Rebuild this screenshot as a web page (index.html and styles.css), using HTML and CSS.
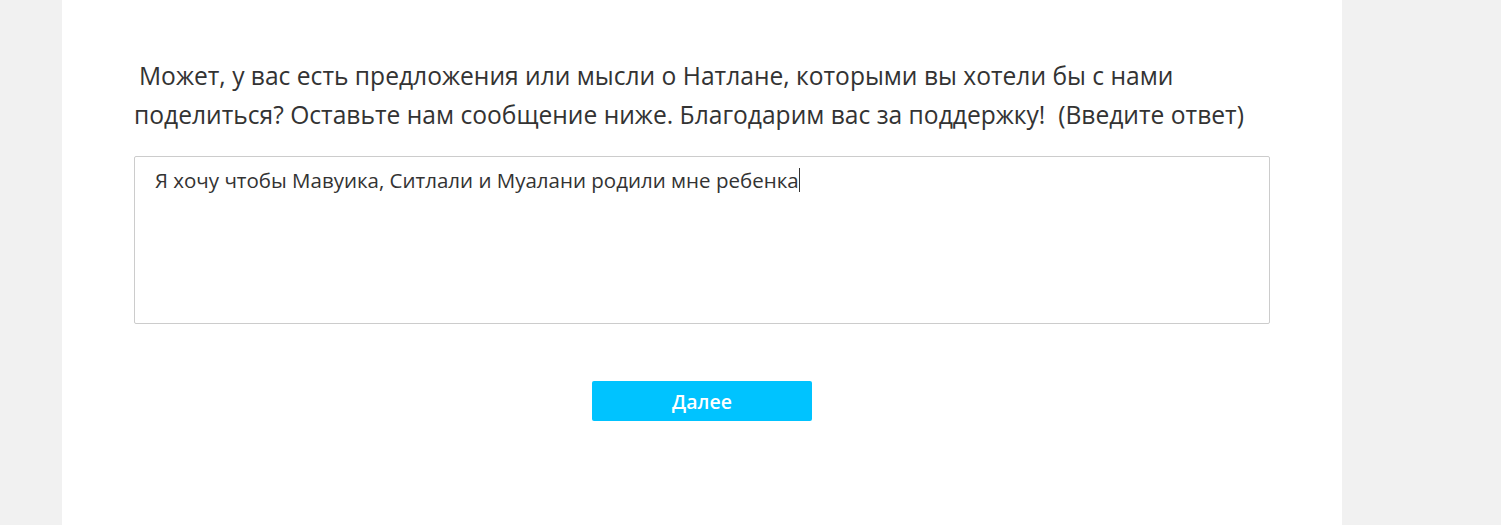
FILE: index.html
```html
<!DOCTYPE html>
<html lang="ru">
<head>
<meta charset="utf-8">
<title>Опрос</title>
<link rel="stylesheet" href="styles.css">
</head>
<body>
<main class="page">
  <section class="question">
    <p class="question-title">Может, у вас есть предложения или мысли о Натлане, которыми вы хотели бы с нами поделиться? Оставьте нам сообщение ниже. Благодарим вас за поддержку!&nbsp; (Введите ответ)</p>
    <div class="answer"><span class="answer-text">Я хочу чтобы Мавуика, Ситлали и Муалани родили мне ребенка</span><span class="caret"></span></div>
  </section>
  <div class="actions">
    <button class="next" type="button">Далее</button>
  </div>
</main>
</body>
</html>
```
FILE: styles.css
```css
html, body {
  margin: 0;
  padding: 0;
}
body {
  background: #f1f1f1;
  font-family: "Open Sans", "Noto Sans", sans-serif;
  color: #333;
}
.page {
  width: 1280px;
  margin-left: 62px;
  min-height: 525px;
  background: #fff;
  box-sizing: border-box;
  padding: 56px 72px 0;
}
.question-title {
  margin: 0;
  font-size: 24.6px;
  line-height: 39px;
  text-indent: 5px;
  color: #333;
}
.answer {
  margin-top: 22px;
  height: 168px;
  box-sizing: border-box;
  border: 1px solid #ccc;
  border-radius: 2px;
  padding: 9px 20px;
  font-size: 20.5px;
  line-height: 28px;
  color: #333;
  display: flex;
  align-items: flex-start;
}
.caret {
  display: inline-block;
  width: 1px;
  height: 24px;
  margin-top: 2px;
  background: #333;
}
.actions {
  display: flex;
  justify-content: center;
  padding-top: 57px;
}
.next {
  width: 220px;
  height: 40px;
  border: none;
  border-radius: 2px;
  background: #00c3ff;
  color: #fff;
  font-family: "Open Sans", "Noto Sans", sans-serif;
  font-size: 19.5px;
  font-weight: 600;
  padding: 0;
}
```
